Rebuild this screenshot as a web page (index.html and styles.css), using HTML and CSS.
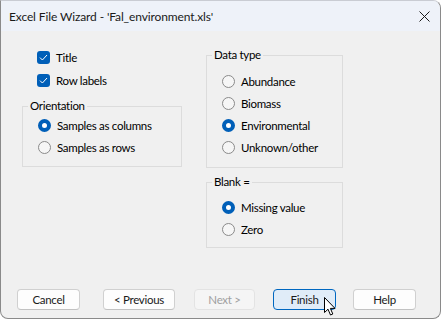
FILE: index.html
```html
<!DOCTYPE html>
<html lang="en">
  <head>
    <meta charset="UTF-8" />
    <title>Excel File Wizard</title>
    <link rel="stylesheet" href="styles.css">
  </head>
  <body>
    <div class="window">
      <div class="titlebar">
        <span class="title">Excel File Wizard - 'Fal_environment.xls'</span>
        <span class="close">
          <svg width="11" height="11" viewBox="0 0 11 11">
            <path d="M0.5 0.5 L10.5 10.5 M10.5 0.5 L0.5 10.5" stroke="#1b1b1b" stroke-width="1" fill="none" />
          </svg>
        </span>
      </div>

      <div class="content">
        <div class="columns">
          <div class="col-left">
            <div class="checks">
              <div class="option">
                <span class="check">
                  <svg width="9" height="7" viewBox="0 0 9 7"><path d="M1 3.6 L3.4 6 L8 1" stroke="#fff" stroke-width="1" fill="none" /></svg>
                </span>
                Title
              </div>
              <div class="option">
                <span class="check">
                  <svg width="9" height="7" viewBox="0 0 9 7"><path d="M1 3.6 L3.4 6 L8 1" stroke="#fff" stroke-width="1" fill="none" /></svg>
                </span>
                Row labels
              </div>
            </div>

            <fieldset class="group group-orient">
              <legend>Orientation</legend>
              <div class="option"><span class="radio checked"></span>Samples as columns</div>
              <div class="option"><span class="radio"></span>Samples as rows</div>
            </fieldset>
          </div>

          <div class="col-right">
            <fieldset class="group group-type">
              <legend>Data type</legend>
              <div class="option"><span class="radio"></span>Abundance</div>
              <div class="option"><span class="radio"></span>Biomass</div>
              <div class="option"><span class="radio checked"></span>Environmental</div>
              <div class="option"><span class="radio"></span>Unknown/other</div>
            </fieldset>

            <fieldset class="group group-blank">
              <legend>Blank =</legend>
              <div class="option"><span class="radio checked"></span>Missing value</div>
              <div class="option"><span class="radio"></span>Zero</div>
            </fieldset>
          </div>
        </div>

        <div class="buttons">
          <button class="btn btn-cancel">Cancel</button>
          <button class="btn btn-prev">&lt; Previous</button>
          <button class="btn btn-next" disabled>Next &gt;</button>
          <button class="btn btn-finish default">Finish</button>
          <button class="btn btn-help">Help</button>
        </div>
      </div>

      <svg class="cursor" width="14" height="20" viewBox="0 0 14 20">
        <path d="M0.5 0.5 L0.5 15.5 L4 12.2 L6.5 18 L8.8 17 L6.4 11.4 L11 11.4 Z" fill="#fff" stroke="#000" stroke-width="1" stroke-linejoin="miter" />
      </svg>
    </div>
  </body>
</html>
```

FILE: styles.css
```css
body {
  margin: 0;
  font-family: Lato, 'Noto Sans', sans-serif;
  font-size: 11.5px;
  letter-spacing: -0.3px;
  color: #000;
}
.window {
  position: relative;
  width: 441px;
  height: 319px;
  box-sizing: border-box;
  border: 1px solid #8a8a8a;
  border-top-color: #c9ccd3;
  border-radius: 0 8px 8px 8px;
  background-color: #f0f0f0;
  display: flex;
  flex-direction: column;
  overflow: hidden;
}
.titlebar {
  height: 30px;
  flex: none;
  display: flex;
  align-items: center;
  justify-content: space-between;
  padding-left: 8px;
  background-color: #eef2f9;
}
.title {
  color: #1a1a1a;
  font-size: 12px;
  letter-spacing: -0.12px;
}
.close {
  width: 32px;
  display: flex;
  justify-content: center;
}
.close svg {
  display: block;
}
.content {
  flex: 1;
  display: flex;
  flex-direction: column;
  padding-bottom: 8px;
}
.columns {
  display: flex;
  gap: 24px;
  padding: 15px 0 0 21px;
}
.col-left {
  width: 160px;
}
.col-right {
  width: 137px;
  padding-top: 1px;
}
.checks {
  padding-left: 15px;
}
.checks .option {
  height: 23px;
}
.option {
  display: flex;
  align-items: center;
  height: 22px;
  white-space: nowrap;
}
.check {
  width: 13px;
  height: 13px;
  box-sizing: border-box;
  border-radius: 3px;
  background-color: #005fb8;
  margin-right: 6px;
  display: flex;
  align-items: center;
  justify-content: center;
}
.check svg {
  display: block;
}
.radio {
  width: 13px;
  height: 13px;
  box-sizing: border-box;
  border-radius: 50%;
  border: 1px solid #8a8a8a;
  background-color: #f6f6f6;
  margin-right: 6px;
  flex: none;
}
.radio.checked {
  border: 4px solid #005fb8;
  background-color: #fff;
}
.group {
  margin: 0;
  padding: 0 0 8px 15px;
  border: 1px solid #dcdcdc;
  min-width: 0;
}
.group legend {
  padding: 0 2px;
  margin-left: -10px;
  line-height: 16px;
}
.group-orient {
  margin-top: 6px;
}
.group-type {
  padding-top: 7px;
  padding-bottom: 9px;
}
.group-blank {
  margin-top: 6px;
  padding-top: 6px;
  padding-bottom: 7px;
}
.buttons {
  margin-top: auto;
  display: flex;
  padding-left: 16px;
}
.btn {
  height: 21px;
  box-sizing: border-box;
  border: 1px solid #d0d0d0;
  border-bottom-color: #c2c2c2;
  border-radius: 4px;
  background-color: #fdfdfd;
  font-family: inherit;
  font-size: 11.5px;
  letter-spacing: -0.3px;
  color: #1a1a1a;
  padding: 0;
}
.btn-cancel {
  width: 63px;
}
.btn-prev {
  width: 72px;
  margin-left: 23px;
}
.btn-next {
  width: 61px;
  margin-left: 19px;
  color: #a0a0a0;
  background-color: #f5f5f5;
  border-color: #e3e3e3;
}
.btn-finish {
  width: 63px;
  margin-left: 18px;
}
.btn-help {
  width: 63px;
  margin-left: 17px;
}
.btn.default {
  border: 1px solid #0067c0;
  background-color: #e0ecf8;
}
.cursor {
  position: absolute;
  left: 323px;
  top: 296px;
}
```
